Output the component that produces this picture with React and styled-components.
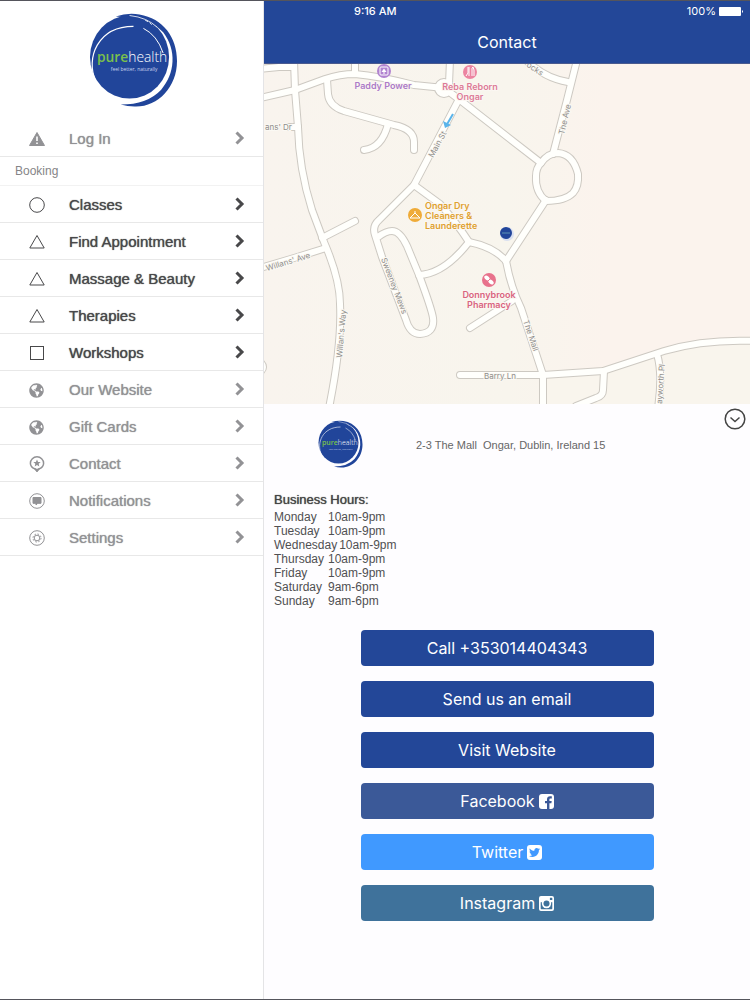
import React from 'react'
import styled, { createGlobalStyle } from 'styled-components'
import { FaTwitter, FaGlobeAmericas } from 'react-icons/fa'

const GlobalStyle = createGlobalStyle`
  * {
    box-sizing: border-box;
  }
  body {
    margin: 0;
    background: #fefeff;
    font-family: 'Liberation Sans', Arial, sans-serif;
  }
`

const bookingItems = [
  { label: 'Classes', icon: 'circle' },
  { label: 'Find Appointment', icon: 'triangle' },
  { label: 'Massage & Beauty', icon: 'triangle' },
  { label: 'Therapies', icon: 'triangle' },
  { label: 'Workshops', icon: 'square' },
]

const moreItems = [
  { label: 'Our Website', icon: 'globe' },
  { label: 'Gift Cards', icon: 'globe' },
  { label: 'Contact', icon: 'pin' },
  { label: 'Notifications', icon: 'message' },
  { label: 'Settings', icon: 'gear' },
]

const hours = [
  ['Monday', '10am-9pm'],
  ['Tuesday', '10am-9pm'],
  ['Wednesday', '10am-9pm'],
  ['Thursday', '10am-9pm'],
  ['Friday', '10am-9pm'],
  ['Saturday', '9am-6pm'],
  ['Sunday', '9am-6pm'],
]

const roads = [
  'M-4 5 L15 3 L30 3',
  'M30 -4 L31 26 L34 63 Q35 105 48 146 L60 178 Q76 215 76 240 Q78 280 65 344',
  'M-4 34 L31 26 L61 15 Q76 10 91 10 Q115 12 150 21 L180 24',
  'M91 -4 L91 10',
  'M63 16 L64 30 Q65 42 80 47 L130 61 Q150 65 150 78 L150 86',
  'M124 60 Q118 84 100 86',
  'M186 -4 L185 20',
  'M180 24 L196 36 L277 99',
  'M194 37 L150 121 L115 156 Q108 162 111 171 L118 193 L142 256 Q146 270 156 270 Q171 269 169 254 Q168 246 155 211 L143 182 Q136 167 128 167 Q122 167 114 173',
  'M150 121 L176 140 Q192 158 205 178',
  'M155 211 Q180 210 205 178 Q230 183 242 197',
  'M242 197 L282 136',
  'M277 99 Q284 89 294 89 Q309 90 314 110 Q315 122 309 129 Q301 137 282 137 Q271 128 272 112 Q272 104 277 99',
  'M313 -4 L303 36 L289 90',
  'M262 -4 Q280 14 304 18',
  'M242 197 Q247 224 257 244 L279 311 L279 344',
  'M206 264 L248 237',
  'M196 311 L279 311 L339 307 L400 287 Q440 275 490 277',
  'M340 307 L339 326 Q339 332 332 334 L312 342',
  'M393 290 Q399 310 394 344',
  'M-4 204 L30 194 L62 184',
  'M58 174 L91 157',
  'M24 63 L34 63',
]

const Mark = () => (
  <svg viewBox="0 0 90 96" width="100%" height="100%" role="img" aria-label="purehealth feel better, naturally">
    <path d="M28 4 Q40 0 52 2 C76 6 90 25 90 49 C90 76 70 96 47 95 Q40 95 33 93 Q60 93 74 78 C88 62 90 38 76 20 Q66 9 52 6z" fill="#21459a" />
    <ellipse cx="42" cy="45" rx="40" ry="42" fill="#21459a" />
    <path d="M8 70 C-3 46 10 14 46 14" fill="none" stroke="#fff" strokeWidth="1.2" />
    <path d="M56 16 Q70 23 76 41" fill="none" stroke="#fff" strokeWidth="1" />
    <path d="M42 3 Q60 5 70 15" fill="none" stroke="#fff" strokeWidth="0.8" />
    <path d="M58 8 Q62 9 66 14" fill="none" stroke="#fff" strokeWidth="1" strokeDasharray="3 2" />
    <text x="9" y="50" fontFamily="Open Sans, sans-serif" fontSize="14" fontWeight="300" fill="#fff">
      <tspan fontWeight="600" fill="#7ac04c">pure</tspan>health
    </text>
    <text x="23" y="59" fontFamily="Open Sans, sans-serif" fontSize="5" fill="#c9d4ee">feel better, naturally</text>
  </svg>
)

const RowIcon = ({ name }) => {
  if (name === 'globe') return <FaGlobeAmericas size={15} />
  return (
    <svg width="16" height="16" viewBox="0 0 16 16" fill="none" stroke="currentColor" strokeWidth="1">
      {name === 'warning' && (
        <>
          <path d="M8 1.5 L15.5 14.5 H.5z" fill="currentColor" />
          <path d="M8 5.5V10M8 11.5V13" stroke="#fff" strokeWidth="1.6" />
        </>
      )}
      {name === 'circle' && <circle cx="8" cy="8" r="7.3" />}
      {name === 'triangle' && <path d="M8 1.5 L15.2 14 H.8z" />}
      {name === 'square' && <rect x="1.5" y="1.5" width="13" height="13" />}
      {name === 'pin' && (
        <>
          <path d="M8 .8a6.6 6.4 0 0 1 6.6 6.400c0 3-2.400 5-5 5.800L8 15 6.400 13C3.800 12.200 1.400 10.200 1.400 7.200A6.600 6.400 0 0 1 8 .8z" strokeWidth="1.5" />
          <path d="M5.5 13L8 16L10.5 13z" fill="currentColor" strokeWidth="0.5" />
          <path d="M8 3.4l1.1 2.5 2.6.2-2 1.7.6 2.6L8 9 5.7 10.4l.6-2.6-2-1.7 2.6-.2z" fill="currentColor" stroke="none" />
        </>
      )}
      {name === 'message' && (
        <>
          <circle cx="8" cy="8" r="7.3" />
          <path d="M4 4.5h8v5.8H8.8L7 12v-1.7H4z" fill="currentColor" />
        </>
      )}
      {name === 'gear' && (
        <>
          <circle cx="8" cy="8" r="7.3" />
          <circle cx="8" cy="8" r="2.8" />
          <circle cx="8" cy="8" r="4" strokeDasharray="1.57 1.57" />
        </>
      )}
    </svg>
  )
}

const Chevron = () => (
  <svg width="10" height="14" viewBox="0 0 10 14" fill="none" stroke="currentColor" strokeWidth="3">
    <path d="M1.5 1.5L7 7L1.5 12.5" />
  </svg>
)

const FacebookIcon = () => (
  <svg width="15" height="15" viewBox="0 0 15 15">
    <rect width="15" height="15" rx="3" fill="#fff" />
    <path d="M8 15V9.2H6V7H8V5.3C8 3.3 9.2 2.2 11 2.2l1.8.1v2.1h-1.2c-1 0-1.2.5-1.2 1.2V7h2.3l-.3 2.2h-2V15z" fill="#3b5998" />
  </svg>
)

const TwitterIcon = () => (
  <TwitterBox>
    <FaTwitter size={11} />
  </TwitterBox>
)

const InstagramIcon = () => (
  <svg width="15" height="15" viewBox="0 0 15 15">
    <path fillRule="evenodd" d="M2 0H13Q15 0 15 2V13Q15 15 13 15H2Q0 15 0 13V2Q0 0 2 0zM1.7 6.3V12.6Q1.7 13.3 2.4 13.3H12.6Q13.3 13.3 13.3 12.6V6.3H12A4.7 4.7 0 1 1 3 6.3zM10.9 1.7V4.1H13.3V2.2Q13.3 1.7 12.8 1.7z" fill="#fff" />
    <circle cx="7.5" cy="7.5" r="3" fill="#3f729b" />
  </svg>
)

const MenuRow = ({ item, dark }) => (
  <li>
    <RowLink href="#" $dark={dark}>
      <IconCell><RowIcon name={item.icon} /></IconCell>
      <RowLabel>{item.label}</RowLabel>
      <Chevron />
    </RowLink>
  </li>
)

const ContactMap = () => (
  <MapSvg viewBox="0 0 486 340" preserveAspectRatio="xMidYMid slice" role="img" aria-label="Map of Ongar">
    <defs>
      <linearGradient id="land" x1="0" x2="1" y1="0" y2="0">
        <stop offset="0" stopColor="#f9f4ee" />
        <stop offset="0.5" stopColor="#f8f5ed" />
        <stop offset="0.7" stopColor="#fbf3ed" />
      </linearGradient>
    </defs>
    <rect width="486" height="340" fill="url(#land)" />
    <path d="M279 311 L339 307 L400 287 Q440 275 486 277 V340 H279z" fill="#f9f5ed" />
    <g fill="none" strokeLinecap="round" strokeLinejoin="round">
      <g stroke="#cdc9c2" strokeWidth="8">
        {roads.map((d) => <path key={d} d={d} />)}
        <circle cx="180" cy="24" r="6" />
        <circle cx="-6" cy="303" r="5" />
      </g>
      <g stroke="#fffffc" strokeWidth="6">
        {roads.map((d) => <path key={d} d={d} />)}
        <circle cx="180" cy="24" r="6" fill="#fffffc" />
        <circle cx="-6" cy="303" r="5" />
      </g>
    </g>
    <path d="M189 50 L182 62" stroke="#5ab4ea" strokeWidth="2" />
    <path d="M179 57 L181 64 L187 61z" fill="#5ab4ea" />

    <StreetNames>
      <text x="1" y="66">ans' Dr</text>
      <text transform="translate(169 94) rotate(-61)">Main St</text>
      <text transform="translate(300 71) rotate(-77)">The Ave</text>
      <text transform="translate(262 2) rotate(34)">ocks</text>
      <text transform="translate(3 207) rotate(-17)">Willans' Ave</text>
      <text transform="translate(78 294) rotate(-85)">Willan's Way</text>
      <text transform="translate(117 195) rotate(69)">Sweeney Mews</text>
      <text transform="translate(259 257) rotate(71)">The Mall</text>
      <text x="220" y="315">Barry Ln</text>
      <text transform="translate(398 340) rotate(-86)">ayworth Pl</text>
    </StreetNames>

    <circle cx="120" cy="7" r="7" fill="#b183d0" />
    <rect x="116" y="3" width="8" height="8" rx="1" fill="none" stroke="#fff" />
    <path d="M120 4.5 L122.5 8 H117.5z M119.5 7h1v3h-1z" fill="#fff" />
    <circle cx="206" cy="8" r="7" fill="#ec84a1" />
    <path d="M204 3v6l-2 3M205 3v9M208 12V4l1-1 1 3v6" fill="none" stroke="#fff" />
    <circle cx="151" cy="151" r="7" fill="#efab38" />
    <path d="M151 149 L146 154 H156z M151 149 V147" fill="none" stroke="#fff" />
    <circle cx="225" cy="216" r="7" fill="#e8728c" />
    <ellipse cx="223" cy="214" rx="3" ry="2" fill="#fff" transform="rotate(40 223 214)" />
    <ellipse cx="227" cy="218" rx="3" ry="2" fill="#fff" transform="rotate(40 227 218)" />
    <path d="M222 219l6-6" stroke="#e8728c" />
    <circle cx="243" cy="170" r="7" fill="#d9dff0" />
    <circle cx="242" cy="169" r="6" fill="#21459a" />
    <path d="M238 169h8" stroke="#5d93b5" />

    <PlaceNames>
      <text x="119" y="25" fill="#ac7bc8" textAnchor="middle">Paddy Power</text>
      <text x="206" y="26" fill="#dd7b98" textAnchor="middle">Reba Reborn</text>
      <text x="206" y="36" fill="#dd7b98" textAnchor="middle">Ongar</text>
      <text x="161" y="145" fill="#dfa12f">Ongar Dry</text>
      <text x="161" y="155" fill="#dfa12f">Cleaners &amp;</text>
      <text x="161" y="165" fill="#dfa12f">Launderette</text>
      <text x="225" y="234" fill="#d9647f" textAnchor="middle">Donnybrook</text>
      <text x="225" y="244" fill="#d9647f" textAnchor="middle">Pharmacy</text>
    </PlaceNames>
  </MapSvg>
)

const App = () => {
  return (
    <Layout>
      <GlobalStyle />
      <Sidebar>
        <SideLogo><Mark /></SideLogo>
        <Menu>
          <MenuRow item={{ label: 'Log In', icon: 'warning' }} />
        </Menu>
        <SectionTitle>Booking</SectionTitle>
        <Menu>
          {bookingItems.map((item) => <MenuRow key={item.label} item={item} dark />)}
          {moreItems.map((item) => <MenuRow key={item.label} item={item} />)}
        </Menu>
      </Sidebar>
      <Main>
        <Header>
          <StatusBar>
            <span>9:16 AM</span>
            <Battery>
              100%
              <svg width="25" height="9" viewBox="0 0 25 9" fill="#fff">
                <rect width="22" height="9" rx="1" />
                <path d="M23 3 Q25 4.5 23 6z" />
              </svg>
            </Battery>
          </StatusBar>
          <Title>Contact</Title>
        </Header>
        <ContactMap />
        <Details>
          <AddressRow>
            <SmallLogo><Mark /></SmallLogo>
            <Address>2-3 The Mall&nbsp; Ongar, Dublin, Ireland 15</Address>
            <CollapseButton aria-label="Hide details">
              <svg width="22" height="22" viewBox="0 0 22 22" fill="none" stroke="#444" strokeWidth="1.5">
                <circle cx="11" cy="11" r="9.8" />
                <path d="M6.5 9.5L11 13.5L15.5 9.5" />
              </svg>
            </CollapseButton>
          </AddressRow>
          <HoursTitle>Business Hours:</HoursTitle>
          <HoursTable>
            <tbody>
              {hours.map(([day, time]) => (
                <tr key={day}>
                  <th scope="row">{day}</th>
                  <td>{time}</td>
                </tr>
              ))}
            </tbody>
          </HoursTable>
          <Actions>
            <ActionButton>Call +353014404343</ActionButton>
            <ActionButton>Send us an email</ActionButton>
            <ActionButton>Visit Website</ActionButton>
            <ActionButton $color="#3b5998">Facebook <FacebookIcon /></ActionButton>
            <ActionButton $color="#4099ff">Twitter <TwitterIcon /></ActionButton>
            <ActionButton $color="#3f729b">Instagram <InstagramIcon /></ActionButton>
          </Actions>
        </Details>
      </Main>
    </Layout>
  )
}

export default App

const Layout = styled.div`
  display: grid;
  grid-template-columns: 264px 1fr;
  min-height: 100vh;
  border-top: 1px solid #55555c;
  border-bottom: 1px solid #55555c;
`
const Sidebar = styled.nav`
  background: #fff;
  border-right: 1px solid #e4e4e6;
`
const SideLogo = styled.div`
  width: 90px;
  height: 96px;
  margin: 11px auto 12px;
  padding-left: 1px;
`
const Menu = styled.ul`
  list-style: none;
  margin: 0;
  padding: 0;
`
const RowLink = styled.a`
  display: flex;
  align-items: center;
  height: 37px;
  padding: 0 18px 0 29px;
  border-bottom: 1px solid #e8e8e8;
  color: ${(props) => (props.$dark ? '#48484a' : '#929295')};
  font-size: 15px;
  text-decoration: none;
`
const IconCell = styled.span`
  display: flex;
  width: 40px;
  padding-top: 2px;
`
const RowLabel = styled.span`
  flex: 1;
  text-shadow: 0 0 1px currentColor;
`
const SectionTitle = styled.h2`
  margin: 0;
  padding: 0 15px;
  border-bottom: 1px solid #f2f2f2;
  color: #858587;
  font-size: 12px;
  font-weight: 400;
  line-height: 28px;
`
const Main = styled.main`
  display: flex;
  flex-direction: column;
  min-width: 0;
`
const Header = styled.header`
  height: 63px;
  background: #234798;
  border-bottom: 1px solid #4a5a8e;
  color: #fff;
`
const StatusBar = styled.div`
  display: flex;
  justify-content: space-between;
  padding: 0 6px 0 90px;
  font-family: Inter, sans-serif;
  font-size: 11px;
  font-weight: 500;
  line-height: 20px;
`
const Battery = styled.span`
  display: flex;
  align-items: center;
  gap: 3px;
  font-weight: 400;
`
const Title = styled.h1`
  margin: 0;
  text-align: center;
  font-family: Inter, sans-serif;
  font-size: 16px;
  font-weight: 400;
  line-height: 42px;
`
const MapSvg = styled.svg`
  display: block;
  width: 100%;
  height: 340px;
`
const StreetNames = styled.g`
  fill: #8f8d8a;
  stroke: #fbf9f4;
  stroke-width: 2px;
  paint-order: stroke;
  font-family: Inter, sans-serif;
  font-size: 8px;
`
const PlaceNames = styled.g`
  stroke: #fbf7f2;
  stroke-width: 2px;
  paint-order: stroke;
  font-family: Inter, sans-serif;
  font-size: 9px;
  font-weight: 600;
`
const Details = styled.section`
  flex: 1;
  padding: 0 10px;
  background: #fefdff;
`
const AddressRow = styled.div`
  display: flex;
  align-items: flex-start;
  margin-right: -6px;
  padding: 4px 0 0 43px;
`
const SmallLogo = styled.div`
  flex: none;
  width: 46px;
  height: 48px;
  margin-top: 12px;
`
const Address = styled.p`
  flex: 1;
  margin: 29px 0 0 53px;
  color: #666;
  font-size: 11px;
  line-height: 16px;
`
const CollapseButton = styled.button`
  display: flex;
  padding: 0;
  border: 0;
  background: none;
`
const HoursTitle = styled.h2`
  margin: 22px 0 0;
  color: #444;
  font-size: 13px;
  font-weight: 400;
  line-height: 20px;
  text-shadow: 0 0 1px currentColor;
`
const HoursTable = styled.table`
  border-collapse: collapse;
  color: #505052;
  font-size: 12px;
  line-height: 14px;

  tr {
    display: flex;
  }
  th, td {
    padding: 0;
    font-weight: 400;
    text-align: left;
  }
  th {
    min-width: 54px;
    padding-right: 2px;
  }
`
const Actions = styled.div`
  display: flex;
  flex-direction: column;
  gap: 15px;
  width: 293px;
  margin: 22px auto 0;
`
const ActionButton = styled.button`
  display: flex;
  align-items: center;
  justify-content: center;
  gap: 4px;
  height: 36px;
  border: 0;
  border-radius: 4px;
  background: ${(props) => props.$color || '#234798'};
  color: #fff;
  font-family: Inter, sans-serif;
  font-size: 16px;
`
const TwitterBox = styled.span`
  display: flex;
  align-items: center;
  justify-content: center;
  width: 15px;
  height: 15px;
  border-radius: 3px;
  background: #fff;
  color: #4099ff;
`
